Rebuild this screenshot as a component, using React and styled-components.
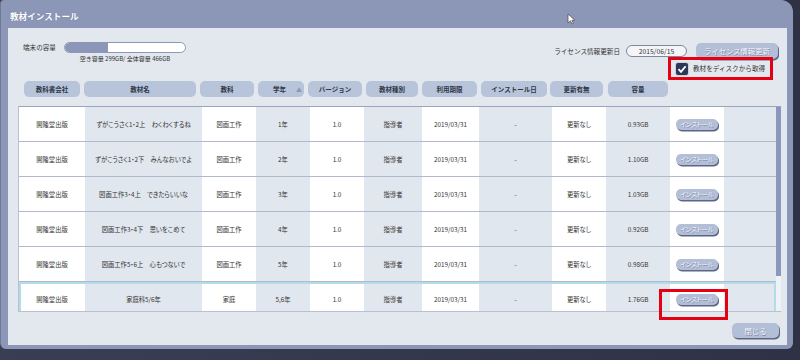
import styled, { createGlobalStyle } from "styled-components";

const Global = createGlobalStyle`
  html, body { margin: 0; padding: 0; background: #34384c; }
  body {
    width: 800px; height: 360px; overflow: hidden;
    font-family: "Noto Sans CJK JP", "Noto Sans", sans-serif;
  }
`;

const Screen = styled.div`
  position: relative;
  width: 800px;
  height: 360px;
  background: linear-gradient(90deg, #3a3e55, #2f3244);
`;

const Frame = styled.div`
  width: 793px;
  height: 349px;
  box-sizing: border-box;
  padding: 0 6px 4px 7px;
  background: #8c96b6;
  border-radius: 4px 12px 6px 6px;
  border-left: 1px solid #6f7898;
  display: flex;
  flex-direction: column;
`;

const TitleBar = styled.div`
  height: 28px;
  box-sizing: border-box;
  padding: 3px 0 0 2px;
  display: flex;
  align-items: center;
  color: #fff;
  font-size: 8.6px;
  font-weight: 700;
  text-shadow: 0 0 1px #6a7393;
`;

const Panel = styled.div`
  flex: 1;
  background: #e3e8ef;
  display: flex;
  flex-direction: column;
`;

const TopArea = styled.div`
  height: 53px;
  display: flex;
  justify-content: space-between;
`;

const Capacity = styled.div`
  padding: 14px 0 0 15px;
  display: flex;
  align-items: flex-start;
  gap: 8px;
`;

const SmallLabel = styled.span`
  font-size: 6.6px;
  color: #333;
  line-height: 11px;
  white-space: nowrap;
`;

const BarBlock = styled.div`
  display: flex;
  flex-direction: column;
  align-items: center;
  gap: 1px;
`;

const Bar = styled.div`
  width: 122px;
  height: 11px;
  box-sizing: border-box;
  border: 1px solid #8c96b6;
  border-radius: 6px;
  background: #fff;
  overflow: hidden;
`;

const BarFill = styled.div`
  height: 100%;
  background: #8c96b8;
`;

const SubText = styled.span`
  font-size: 6px;
  color: #333;
  white-space: nowrap;
`;

const LicenseSide = styled.div`
  padding: 15px 9px 0 0;
  display: flex;
  flex-direction: column;
  align-items: flex-end;
`;

const LicenseRow = styled.div`
  display: flex;
  align-items: center;
  height: 16px;
`;

const DatePill = styled.div`
  width: 61px;
  height: 12px;
  box-sizing: border-box;
  margin: 0 9px 0 6px;
  border: 1px solid #7f879f;
  border-radius: 6px;
  background: #f3f5f9;
  font-size: 6.8px;
  color: #333;
  display: flex;
  align-items: center;
  justify-content: center;
`;

const SoftButton = styled.div`
  width: ${(p) => p.$w}px;
  height: ${(p) => p.$h}px;
  border-radius: 5px;
  background: #b3bed7;
  box-shadow: 1px 1.5px 0 #5d6584;
  color: #f3f5fb;
  font-size: ${(p) => p.$fs || 7}px;
  text-shadow: 0.6px 0.6px 0 #7c86a6;
  display: flex;
  align-items: center;
  justify-content: center;
  white-space: nowrap;
`;

const RedBox = styled.div`
  width: 105px;
  height: 23px;
  box-sizing: border-box;
  margin: -2px 5px 0 0;
  border: 3px solid #e60012;
  padding-left: 5px;
  display: flex;
  align-items: center;
  gap: 5px;
`;

const Check = styled.div`
  width: 12px;
  height: 12px;
  border-radius: 2px;
  background: #2c3758;
  box-shadow: 0 0 0 1px #c9d0e0;
  display: flex;
  align-items: center;
  justify-content: center;
`;

const Header = styled.div`
  height: 16px;
  padding-left: 16px;
  display: flex;
  gap: 4px;
`;

const HeadPill = styled.div`
  width: ${(p) => p.$w}px;
  margin-left: ${(p) => p.$ml || 0}px;
  border-radius: 5px;
  background: #b8c4da;
  color: #303746;
  font-size: 6.5px;
  font-weight: 700;
  display: flex;
  align-items: center;
  justify-content: ${(p) => (p.$sort ? "flex-start" : "center")};
  padding-left: ${(p) => (p.$sort ? 15 : 0)}px;
  box-sizing: border-box;
  white-space: nowrap;
`;

const SortMark = styled.span`
  margin-left: 10px;
  color: #8d97b4;
  font-size: 6px;
`;

const Table = styled.div`
  height: 206px;
  margin: 9px 6px 0 10px;
  box-sizing: border-box;
  border-top: 1px solid #9ba4bf;
  border-left: 1px solid #b8c0d1;
  border-bottom: 1px solid #b8c0d1;
  display: flex;
`;

const Rows = styled.div`
  flex: 1;
  overflow: hidden;
`;

const Row = styled.div`
  display: grid;
  grid-template-columns: 66px 117px 54px 54px 54px 58px 57px 73px 54px 64px 54px 53px;
  height: 35px;
  box-sizing: border-box;
  border-bottom: 1px solid #b1b9cb;
  outline: ${(p) => (p.$selected ? "2px solid #b2dde8" : "none")};
  outline-offset: -2px;
`;

const Cell = styled.div`
  background: ${(p) => (p.$alt ? "#e1e7ef" : "#fff")};
  color: #333;
  font-size: 6.3px;
  font-feature-settings: "palt";
  display: flex;
  align-items: center;
  justify-content: center;
  white-space: nowrap;
`;

const Track = styled.div`
  width: 5px;
  background: #eef1f6;
`;

const Thumb = styled.div`
  height: 169px;
  background: #8d96bc;
`;

const Footer = styled.div`
  display: flex;
  justify-content: flex-end;
  padding: 11px 8px 0 0;
`;

const Cursor = styled.svg`
  position: absolute;
  left: 567px;
  top: 13px;
`;

const Highlight = styled.div`
  position: absolute;
  left: 659px;
  top: 289px;
  width: 69px;
  height: 31px;
  box-sizing: border-box;
  border: 3px solid #e60012;
`;

const heads = [
  { t: "教科書会社", w: 56 },
  { t: "教材名", w: 112 },
  { t: "教科", w: 54 },
  { t: "学年", w: 46, sort: true },
  { t: "バージョン", w: 54 },
  { t: "教材種別", w: 52 },
  { t: "利用期限", w: 55 },
  { t: "インストール日", w: 66 },
  { t: "更新有無", w: 53, ml: -1 },
  { t: "容量", w: 60, ml: 1 },
];

const items = [
  { name: "ずがこうさく1・2上　わくわくするね", subj: "図画工作", grade: "1年", size: "0.93GB" },
  { name: "ずがこうさく1・2下　みんなおいでよ", subj: "図画工作", grade: "2年", size: "1.10GB" },
  { name: "図画工作3・4上　できたらいいな", subj: "図画工作", grade: "3年", size: "1.03GB" },
  { name: "図画工作3・4下　思いをこめて", subj: "図画工作", grade: "4年", size: "0.92GB" },
  { name: "図画工作5・6上　心もつないで", subj: "図画工作", grade: "5年", size: "0.98GB" },
  { name: "家庭科5/6年", subj: "家庭", grade: "5,6年", size: "1.76GB" },
];

const free = 299;
const total = 466;

export default function App() {
  return (
    <Screen>
      <Global />
      <Frame>
        <TitleBar>教材インストール</TitleBar>
        <Panel>
          <TopArea>
            <Capacity>
              <SmallLabel>端末の容量</SmallLabel>
              <BarBlock>
                <Bar>
                  <BarFill style={{ width: `${(1 - free / total) * 100}%` }} />
                </Bar>
                <SubText>空き容量 {free}GB/ 全体容量 {total}GB</SubText>
              </BarBlock>
            </Capacity>
            <LicenseSide>
              <LicenseRow>
                <SmallLabel>ライセンス情報更新日</SmallLabel>
                <DatePill>2015/06/15</DatePill>
                <SoftButton $w={82} $h={16} $fs={7.3}>ライセンス情報更新</SoftButton>
              </LicenseRow>
              <RedBox>
                <Check>
                  <svg width="10" height="10" viewBox="0 0 10 10">
                    <path d="M1.5 5.2 L4 7.8 L8.6 2.2" fill="none" stroke="#fff" strokeWidth="1.8" />
                  </svg>
                </Check>
                <SmallLabel>教材をディスクから取得</SmallLabel>
              </RedBox>
            </LicenseSide>
          </TopArea>

          <Header>
            {heads.map((h) => (
              <HeadPill key={h.t} $w={h.w} $ml={h.ml} $sort={h.sort}>
                {h.t}
                {h.sort && <SortMark>▲</SortMark>}
              </HeadPill>
            ))}
          </Header>

          <Table>
            <Rows>
              {items.map((it, i) => (
                <Row key={i} $selected={i === items.length - 1}>
                  <Cell>開隆堂出版</Cell>
                  <Cell $alt>{it.name}</Cell>
                  <Cell>{it.subj}</Cell>
                  <Cell $alt>{it.grade}</Cell>
                  <Cell>1.0</Cell>
                  <Cell $alt>指導者</Cell>
                  <Cell>2019/03/31</Cell>
                  <Cell $alt>-</Cell>
                  <Cell>更新なし</Cell>
                  <Cell $alt>{it.size}</Cell>
                  <Cell>
                    <SoftButton $w={42} $h={11} $fs={6.3}>インストール</SoftButton>
                  </Cell>
                  <Cell $alt />
                </Row>
              ))}
            </Rows>
            <Track>
              <Thumb />
            </Track>
          </Table>

          <Footer>
            <SoftButton $w={47} $h={15} $fs={7.3}>閉じる</SoftButton>
          </Footer>
        </Panel>
      </Frame>

      <Highlight />
      <Cursor width="9" height="12" viewBox="0 0 9 12">
        <path d="M1 1 L1 10 L3.4 7.8 L5 11 L6.4 10.3 L4.9 7.2 L8 7.2 Z" fill="#fff" stroke="#555" strokeWidth="0.8" />
      </Cursor>
    </Screen>
  );
}
